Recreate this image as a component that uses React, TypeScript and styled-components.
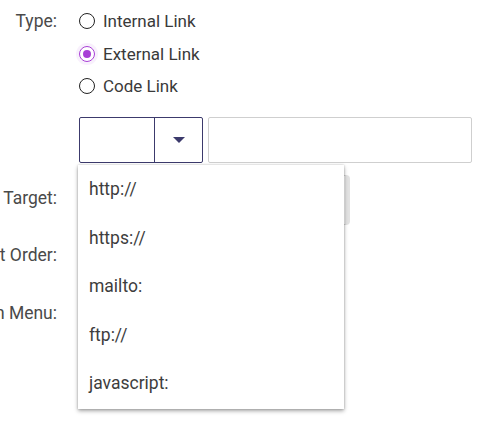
import React from "react";
import styled, { createGlobalStyle } from "styled-components";

const Global = createGlobalStyle`
  html, body { margin: 0; padding: 0; background: #fff; }
  body { font-family: Roboto, "Liberation Sans", sans-serif; }
`;

const Page = styled.div`
  width: 500px;
  height: 432px;
  overflow: hidden;
  position: relative;
  padding-top: 5px;
  box-sizing: border-box;
`;

const FormRow = styled.div<{ $h: number; $mt?: number }>`
  display: grid;
  grid-template-columns: 57px 1fr;
  column-gap: 22px;
  align-items: start;
  min-height: ${(p) => p.$h}px;
  margin-top: ${(p) => p.$mt ?? 0}px;
`;

const Label = styled.div<{ $pt: number }>`
  display: flex;
  justify-content: flex-end;
  white-space: nowrap;
  font-size: 17.5px;
  color: #4a4a4a;
  padding-top: ${(p) => p.$pt}px;
  line-height: 22px;
`;

const RadioGroup = styled.div`
  display: flex;
  flex-direction: column;
`;

const RadioItem = styled.label`
  display: flex;
  align-items: center;
  gap: 8px;
  height: 32.5px;
  font-size: 17px;
  color: #3a3a3a;
`;

const Circle = styled.span<{ $on?: boolean }>`
  width: 16px;
  height: 16px;
  box-sizing: border-box;
  border-radius: 50%;
  border: 1.5px solid ${(p) => (p.$on ? "#a83fd6" : "#222")};
  display: flex;
  align-items: center;
  justify-content: center;
  box-shadow: ${(p) => (p.$on ? "0 0 0 3px rgba(168,63,214,0.08)" : "none")};
  &::after {
    content: "";
    width: 8px;
    height: 8px;
    border-radius: 50%;
    background: #a83fd6;
    display: ${(p) => (p.$on ? "block" : "none")};
  }
`;

const LinkRow = styled.div`
  grid-column: 2;
  display: flex;
  gap: 5px;
  position: relative;
  margin-top: 14px;
`;

const SelectBox = styled.div`
  width: 124px;
  height: 46px;
  box-sizing: border-box;
  border: 1.5px solid #3c3a6c;
  border-radius: 2px;
  display: grid;
  grid-template-columns: 75px 1fr;
`;

const SelectValue = styled.div`
  border-right: 1.5px solid #3c3a6c;
`;

const SelectArrow = styled.div`
  display: flex;
  align-items: center;
  justify-content: center;
  &::after {
    content: "";
    border-left: 6px solid transparent;
    border-right: 6px solid transparent;
    border-top: 6px solid #3c3a6c;
    margin-left: 1px;
  }
`;

const TextInput = styled.div`
  width: 264px;
  height: 46px;
  box-sizing: border-box;
  border: 1px solid #cfcfcf;
  border-radius: 2px;
`;

const Field = styled.div`
  width: 271px;
  height: 50px;
  box-sizing: border-box;
  border: 1px solid #d6d6d6;
  border-right: 5px solid #e2e2e2;
  border-radius: 4px;
`;

const Menu = styled.ul`
  position: absolute;
  left: -1px;
  top: calc(100% + 2px);
  width: 266px;
  height: 244px;
  margin: 0;
  padding: 0;
  list-style: none;
  background: #fff;
  box-shadow: 0 2px 4px rgba(0, 0, 0, 0.35), 0 0 2px rgba(0, 0, 0, 0.2);
  z-index: 10;
  display: flex;
  flex-direction: column;
`;

const MenuItem = styled.li`
  height: 49.5px;
  display: flex;
  align-items: center;
  padding-left: 11px;
  font-size: 17.5px;
  color: #3d3d3d;
  line-height: 1;
  &:first-child {
    height: 50px;
    padding-top: 1px;
  }
`;

const options = ["http://", "https://", "mailto:", "ftp://", "javascript:"];

export default function App() {
  return (
    <Page>
      <Global />
      <FormRow $h={0}>
        <Label $pt={5}>Type:</Label>
        <RadioGroup>
          <RadioItem>
            <Circle />
            Internal Link
          </RadioItem>
          <RadioItem>
            <Circle $on />
            External Link
          </RadioItem>
          <RadioItem>
            <Circle />
            Code Link
          </RadioItem>
        </RadioGroup>
        <LinkRow>
          <SelectBox>
            <SelectValue />
            <SelectArrow />
          </SelectBox>
          <TextInput />
          <Menu>
            {options.map((o) => (
              <MenuItem key={o}>{o}</MenuItem>
            ))}
          </Menu>
        </LinkRow>
      </FormRow>
      <FormRow $h={57} $mt={12}>
        <Label $pt={12}>Link Target:</Label>
        <Field />
      </FormRow>
      <FormRow $h={58}>
        <Label $pt={12}>Sort Order:</Label>
        <div />
      </FormRow>
      <FormRow $h={58}>
        <Label $pt={12}>Show in Menu:</Label>
        <div />
      </FormRow>
    </Page>
  );
}
